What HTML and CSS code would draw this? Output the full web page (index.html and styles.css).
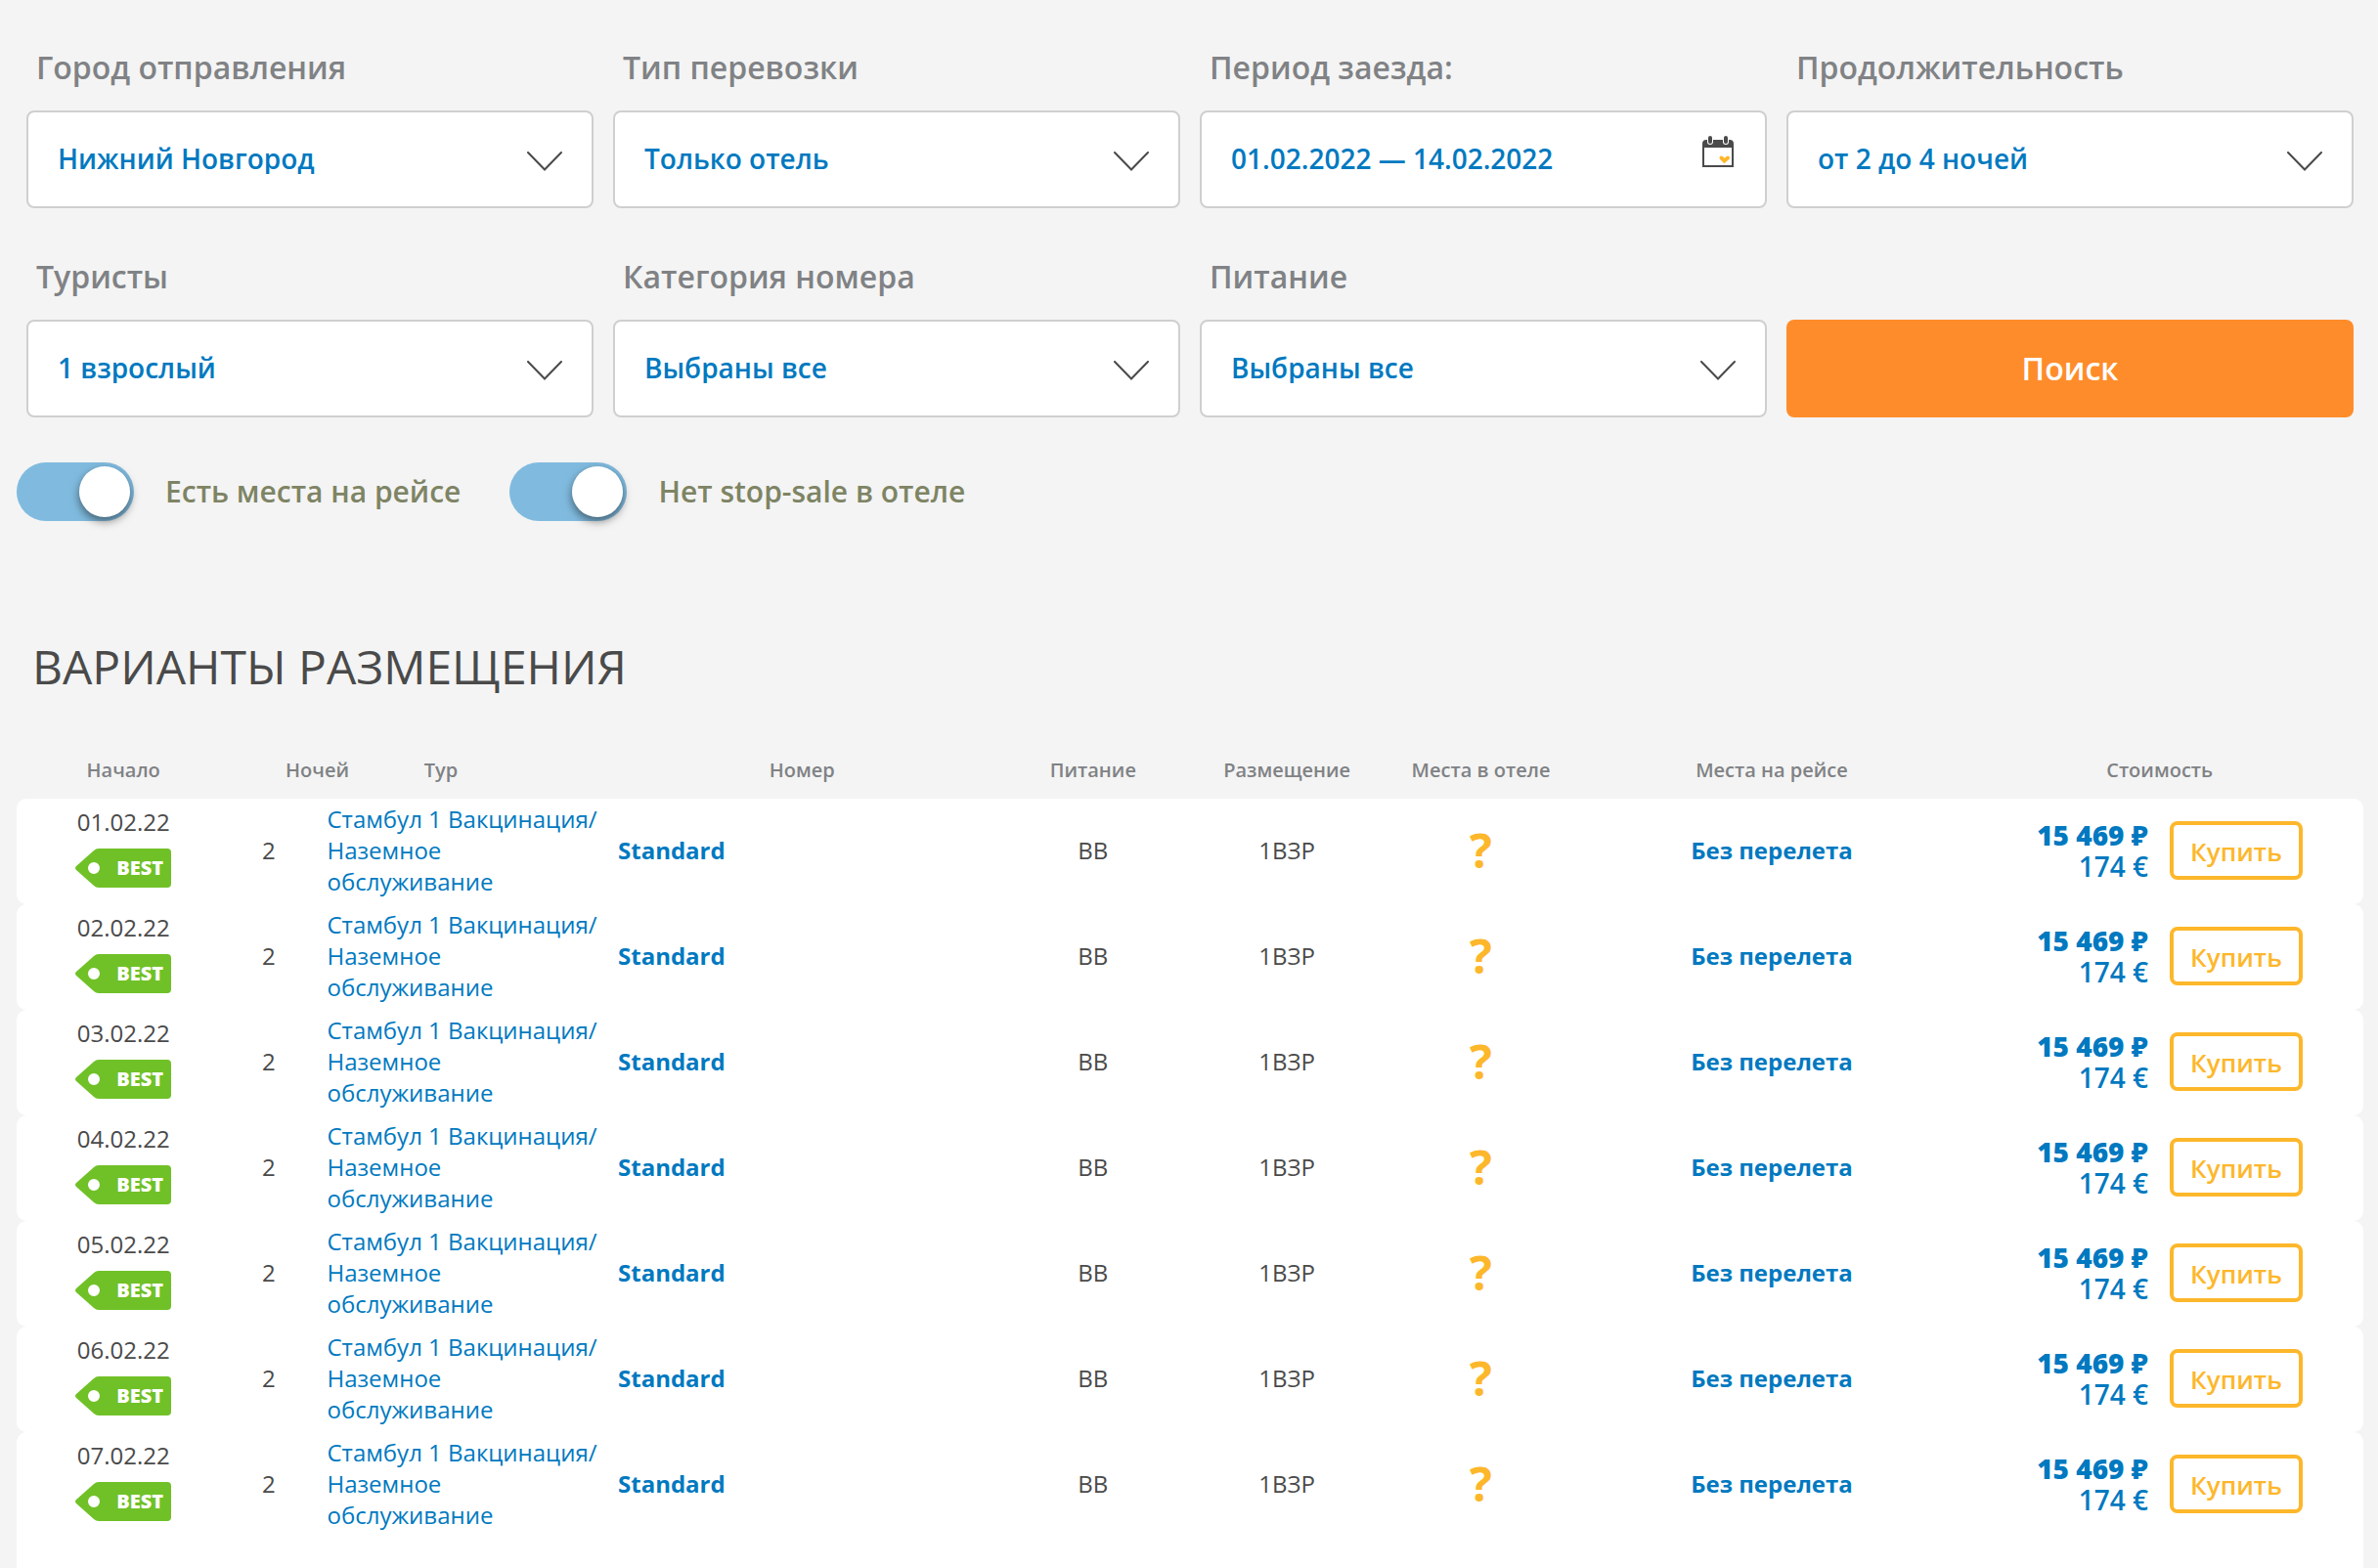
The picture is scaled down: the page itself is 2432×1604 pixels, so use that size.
FILE: index.html
```
<!DOCTYPE html>
<html lang="ru">
<head>
<meta charset="utf-8">
<title>Варианты размещения</title>
<meta name="viewport" content="width=device-width, initial-scale=1">
<link rel="stylesheet" href="styles.css">
</head>
<body>
<main class="page">
  <form class="search">
    <div class="fields">
      <div class="field">
        <label class="field-label" for="city">Город отправления</label>
        <div class="control">
          <select class="input" id="city"><option>Нижний Новгород</option></select>
          <svg class="arrow" viewBox="0 0 36 20" aria-hidden="true"><path d="M1 1l17 17.500L35 1"/></svg>
        </div>
      </div>
      <div class="field">
        <label class="field-label" for="transport">Тип перевозки</label>
        <div class="control">
          <select class="input" id="transport"><option>Только отель</option></select>
          <svg class="arrow" viewBox="0 0 36 20" aria-hidden="true"><path d="M1 1l17 17.500L35 1"/></svg>
        </div>
      </div>
      <div class="field">
        <label class="field-label" for="period">Период заезда:</label>
        <div class="control">
          <input class="input" id="period" type="text" value="01.02.2022 — 14.02.2022">
          <svg class="calendar" viewBox="0 0 34 34" aria-hidden="true">
            <path fill="#4a4a4a" d="M1 9q0-4 4-4h24q4 0 4 4v24H1zM3 13v18h28V13z"/>
            <rect x="6" y="0" width="6" height="10" rx="3" fill="#fff"/>
            <rect x="22" y="0" width="6" height="10" rx="3" fill="#fff"/>
            <rect x="7" y="1" width="4" height="8" rx="2" fill="#4a4a4a"/>
            <rect x="23" y="1" width="4" height="8" rx="2" fill="#4a4a4a"/>
            <path fill="none" stroke="#fdb72b" stroke-width="4" stroke-linecap="round" d="M20.500 23.500l3 3 3.500-3"/>
          </svg>
        </div>
      </div>
      <div class="field">
        <label class="field-label" for="nights">Продолжительность</label>
        <div class="control">
          <select class="input" id="nights"><option>от 2 до 4 ночей</option></select>
          <svg class="arrow" viewBox="0 0 36 20" aria-hidden="true"><path d="M1 1l17 17.500L35 1"/></svg>
        </div>
      </div>
      <div class="field">
        <label class="field-label" for="tourists">Туристы</label>
        <div class="control">
          <select class="input" id="tourists"><option>1 взрослый</option></select>
          <svg class="arrow" viewBox="0 0 36 20" aria-hidden="true"><path d="M1 1l17 17.500L35 1"/></svg>
        </div>
      </div>
      <div class="field">
        <label class="field-label" for="room">Категория номера</label>
        <div class="control">
          <select class="input" id="room"><option>Выбраны все</option></select>
          <svg class="arrow" viewBox="0 0 36 20" aria-hidden="true"><path d="M1 1l17 17.500L35 1"/></svg>
        </div>
      </div>
      <div class="field">
        <label class="field-label" for="meal">Питание</label>
        <div class="control">
          <select class="input" id="meal"><option>Выбраны все</option></select>
          <svg class="arrow" viewBox="0 0 36 20" aria-hidden="true"><path d="M1 1l17 17.500L35 1"/></svg>
        </div>
      </div>
      <button class="submit" type="button">Поиск</button>
    </div>
    <div class="toggles">
      <label class="toggle"><input class="switch" type="checkbox" checked>Есть места на рейсе</label>
      <label class="toggle"><input class="switch" type="checkbox" checked>Нет stop-sale в отеле</label>
    </div>
  </form>

  <h1 class="title">ВАРИАНТЫ РАЗМЕЩЕНИЯ</h1>

  <table class="offers">
    <thead>
      <tr class="row head">
        <th class="span-2">Начало</th>
        <th class="span-2" colspan="2">Ночей</th>
        <th class="span-2 start">Тур</th>
        <th class="span-4">Номер</th>
        <th class="span-2">Питание</th>
        <th class="span-2">Размещение</th>
        <th class="span-2">Места в отеле</th>
        <th class="span-4">Места на рейсе</th>
        <th class="span-4">Стоимость</th>
      </tr>
    </thead>
    <tbody id="offers"></tbody>
  </table>
</main>

<template id="offer">
  <tr class="row offer">
    <td class="span-2 begin"><span class="date"></span><span class="badge"><svg class="tag" viewBox="0 0 98 40" preserveAspectRatio="none" aria-hidden="true"><path fill="#70c127" fill-rule="evenodd" d="M24 0h70q4 0 4 4v32q0 4-4 4H24q-3 0-5-2L1 22q-2-2 0-4L19 2q2-2 5-2zM19 14a6 6 0 1 0 0 12 6 6 0 0 0 0-12z"/></svg><b class="badge-text">BEST</b></span></td>
    <td>2</td>
    <td class="span-3 start" colspan="2"><a class="tour" href="#">Стамбул 1 Вакцинация/Наземное обслуживание</a></td>
    <td class="span-4 start"><a class="strong" href="#">Standard</a></td>
    <td class="span-2">BB</td>
    <td class="span-2">1ВЗР</td>
    <td class="span-2 unknown">?</td>
    <td class="span-4 strong">Без перелета</td>
    <td class="span-4 cost">
      <div class="price"><b class="rub">15 469 ₽</b><span>174 €</span></div>
      <button class="buy" type="button">Купить</button>
    </td>
  </tr>
</template>
<script src="offers.js"></script>
</body>
</html>
```
FILE: styles.css
```
*, *::before, *::after { box-sizing: border-box; }

body {
  margin: 0;
  background: #f4f4f4;
  color: #4a4a4a;
  font-family: "Open Sans", "Noto Sans", sans-serif;
  font-size: 24px;
  line-height: 32px;
}

button, input, select { font: inherit; }
a { color: inherit; text-decoration: none; }

.page { padding: 47px 15px 0 17px; }

/* Search form */
.fields {
  display: grid;
  grid-template-columns: repeat(4, minmax(0, 1fr));
  gap: 48px 20px;
  padding: 0 10px;
}
.field { display: flex; flex-direction: column; gap: 22px; }
.field-label {
  padding-left: 10px;
  color: #808285;
  font-size: 32px;
  font-weight: 600;
  line-height: 44px;
}
.control { display: grid; align-items: center; }
.control > * { grid-area: 1 / 1; }
.input {
  width: 100%;
  height: 100px;
  padding: 0 80px 2px 30px;
  border: 2px solid #cfcfcf;
  border-radius: 8px;
  background: #fff;
  color: #0079c0;
  font-size: 28px;
  font-weight: 600;
  appearance: none;
}
.arrow {
  justify-self: end;
  width: 36px;
  height: 20px;
  margin: 4px 32px 0 0;
  fill: none;
  stroke: #4a4a4a;
  stroke-width: 2;
  stroke-linecap: round;
  pointer-events: none;
}
.calendar {
  justify-self: end;
  width: 34px;
  height: 34px;
  margin: 0 33px 16px 0;
}
.submit {
  align-self: end;
  height: 100px;
  border: 0;
  border-radius: 8px;
  background: #ff8c2b;
  color: #fff;
  font-size: 32px;
  font-weight: 600;
}

/* Switches */
.toggles { display: flex; gap: 50px; margin-top: 46px; }
.toggle {
  display: flex;
  align-items: center;
  gap: 32px;
  color: #7e8464;
  font-size: 30px;
  font-weight: 600;
}
.switch {
  width: 120px;
  height: 60px;
  margin: 0;
  padding: 4px;
  border-radius: 30px;
  background: #c8c8c8;
  appearance: none;
}
.switch::before {
  content: "";
  display: block;
  width: 52px;
  height: 52px;
  border-radius: 50%;
  background: #fff;
  box-shadow: 0 4px 10px rgba(0, 0, 0, .5);
}
.switch:checked { background: #80bbdf; }
.switch:checked::before { margin-left: 60px; }

.title {
  margin: 117px 0 60px;
  padding-left: 16px;
  font-size: 48px;
  font-weight: 400;
  line-height: 64px;
}

/* Offers table: every row is a 24-track grid */
.offers, .offers thead, .offers tbody { display: block; }
.row {
  display: grid;
  grid-template-columns: repeat(24, minmax(0, 1fr));
  align-items: center;
  padding: 5px 10px 7px;
  text-align: center;
}
.row th, .row td { padding: 0; }
.row .start { padding-left: 10px; text-align: left; }
.span-2 { grid-column: span 2; }
.span-3 { grid-column: span 3; }
.span-4 { grid-column: span 4; }

.head { padding: 0 10px 15px; }
.head th {
  color: #808285;
  font-size: 20px;
  font-weight: 600;
  line-height: 28px;
}
.offer { border-radius: 10px; background: #fff; }
.offer:last-child { padding-bottom: 60px; }

.begin {
  display: flex;
  flex-direction: column;
  align-items: center;
  align-self: start;
  gap: 11px;
}
.row .begin { padding-top: 3px; }
.badge { display: grid; width: 98px; height: 40px; align-items: center; }
.badge > * { grid-area: 1 / 1; }
.tag { width: 98px; height: 40px; }
.badge-text {
  z-index: 1;
  padding-right: 8px;
  color: #fff;
  font-size: 20px;
  font-weight: 800;
  line-height: 28px;
  text-align: right;
}
.tour { color: #0079c0; }
.strong { color: #0079c0; font-weight: 700; }
.unknown { color: #fdb72b; font-size: 48px; font-weight: 700; }

.cost { display: flex; align-items: center; gap: 22px; justify-content: flex-end; }
.row .cost { padding-right: 52px; }
.price {
  display: flex;
  flex-direction: column;
  align-items: flex-end;
  color: #0079c0;
  font-size: 28px;
  font-weight: 600;
}
.rub { font-weight: 800; }
.buy {
  width: 136px;
  height: 60px;
  padding: 2px 0 0;
  border: 4px solid #fdb72b;
  border-radius: 8px;
  background: #fff;
  color: #fdb72b;
  font-size: 26px;
  font-weight: 600;
}
```
FILE: offers.js
```
const dates = ["01.02.22", "02.02.22", "03.02.22", "04.02.22", "05.02.22", "06.02.22", "07.02.22"];
const template = document.getElementById("offer");
const body = document.getElementById("offers");

for (const date of dates) {
  const row = template.content.cloneNode(true);
  row.querySelector(".date").textContent = date;
  body.append(row);
}
```
